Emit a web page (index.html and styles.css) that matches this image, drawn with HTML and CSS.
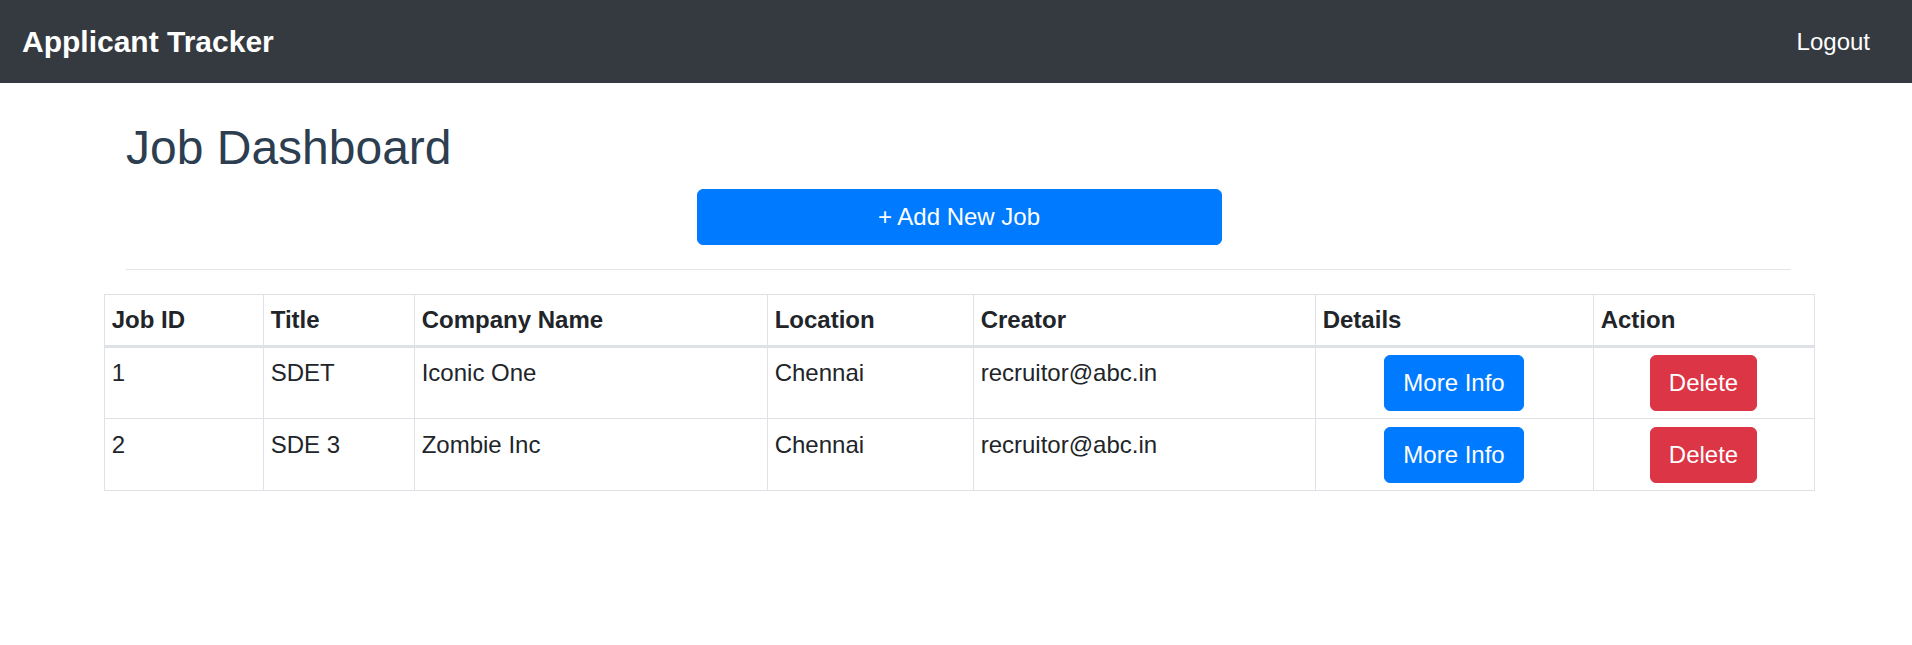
FILE: index.html
```html
<!DOCTYPE html>
<html lang="en">
<head>
<meta charset="utf-8">
<title>Applicant Tracker</title>
<link rel="stylesheet" href="styles.css">
</head>
<body>
<nav class="navbar">
  <a class="brand" href="#">Applicant Tracker</a>
  <a class="nav-link" href="#">Logout</a>
</nav>
<main class="page">
  <div class="container">
    <div class="head-area">
      <h2 class="title">Job Dashboard</h2>
      <div class="add-row">
        <button class="btn btn-primary btn-add">+ Add New Job</button>
      </div>
      <hr class="divider">
    </div>
    <table class="jobs">
      <colgroup>
        <col class="c-id"><col class="c-title"><col class="c-company"><col class="c-loc"><col class="c-creator"><col class="c-details"><col class="c-action">
      </colgroup>
      <thead>
        <tr>
          <th>Job ID</th><th>Title</th><th>Company Name</th><th>Location</th><th>Creator</th><th>Details</th><th>Action</th>
        </tr>
      </thead>
      <tbody>
        <tr>
          <td>1</td><td>SDET</td><td>Iconic One</td><td>Chennai</td><td>recruitor@abc.in</td>
          <td class="center"><button class="btn btn-primary">More Info</button></td>
          <td class="center"><button class="btn btn-danger">Delete</button></td>
        </tr>
        <tr>
          <td>2</td><td>SDE 3</td><td>Zombie Inc</td><td>Chennai</td><td>recruitor@abc.in</td>
          <td class="center"><button class="btn btn-primary">More Info</button></td>
          <td class="center"><button class="btn btn-danger">Delete</button></td>
        </tr>
      </tbody>
    </table>
  </div>
</main>
</body>
</html>
```
FILE: styles.css
```css
* { box-sizing: border-box; }
html, body { margin: 0; padding: 0; }
body {
  font-family: "Liberation Sans", Arial, sans-serif;
  font-size: 24px;
  line-height: 36px;
  color: #212529;
  background: #fff;
}
.navbar {
  display: flex;
  justify-content: space-between;
  align-items: center;
  height: 83px;
  padding: 0 24px 0 22px;
  background: #343a40;
}
.brand {
  font-size: 30px;
  font-weight: bold;
  line-height: 45px;
  color: #fff;
  text-decoration: none;
}
.nav-link {
  font-size: 24px;
  line-height: 36px;
  color: #fff;
  text-decoration: none;
  margin-right: 18px;
}
.page { padding-left: 5px; }
.container {
  width: 1710px;
  margin: 0 auto;
}
.head-area { padding: 0 22.5px; }
.title {
  margin: 36px 0 12px;
  font-size: 48px;
  line-height: 57.6px;
  font-weight: normal;
  color: #2c3e50;
}
.add-row { display: flex; }
.btn {
  display: inline-block;
  font-family: inherit;
  font-size: 24px;
  line-height: 36px;
  padding: 9px 18px;
  border: 1px solid transparent;
  border-radius: 6px;
  color: #fff;
  cursor: pointer;
  vertical-align: middle;
}
.btn-primary { background: #007bff; border-color: #007bff; }
.btn-danger { background: #dc3545; border-color: #dc3545; }
.btn-add {
  width: 525px;
  margin-left: 570.5px;
}
.divider {
  margin: 24px 0;
  border: 0;
  border-top: 1.5px solid rgba(0,0,0,0.1);
}
.jobs {
  width: 1710px;
  table-layout: fixed;
  border-collapse: collapse;
  border: 1px solid #dee2e6;
}
.c-id { width: 159px; }
.c-title { width: 151px; }
.c-company { width: 353px; }
.c-loc { width: 206px; }
.c-creator { width: 342px; }
.c-details { width: 278px; }
.c-action { width: 221px; }
.jobs th, .jobs td {
  border: 1px solid #dee2e6;
  padding: 7.2px;
  text-align: left;
  vertical-align: top;
}
.jobs th {
  font-weight: bold;
  border-bottom: 3px solid #dee2e6;
}
.jobs td.center { text-align: center; }
```
